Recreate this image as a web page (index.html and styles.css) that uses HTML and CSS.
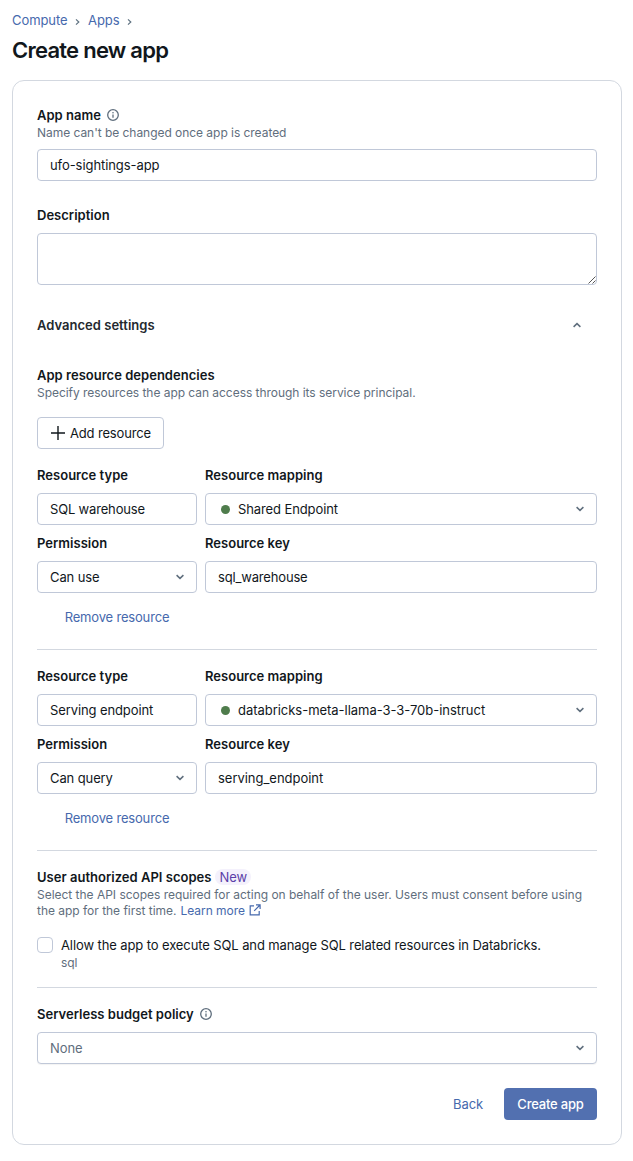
FILE: index.html
```html
<!DOCTYPE html>
<html lang="en">
<head>
<meta charset="utf-8">
<title>Create new app</title>
<link rel="stylesheet" href="styles.css">
</head>
<body>
<svg class="sprite" width="0" height="0" aria-hidden="true">
  <symbol id="chevron" viewBox="0 0 8 6"><path d="M.6 1.1 4 4.4 7.4 1.1" fill="none" stroke="currentColor" stroke-width="1.5"/></symbol>
  <symbol id="info" viewBox="0 0 12 12"><circle cx="6" cy="6" r="5.3" fill="none" stroke="currentColor" stroke-width="1.3"/><path d="M6 5.4V8.8" stroke="currentColor" stroke-width="1.3"/><circle cx="6" cy="3.7" r=".8" fill="currentColor"/></symbol>
  <symbol id="crumb" viewBox="0 0 5 8"><path d="M1 1.4 3.8 4 1 6.6" fill="none" stroke="currentColor" stroke-width="1.2"/></symbol>
</svg>
<nav class="breadcrumb">
  <a>Compute</a><svg><use href="#crumb"/></svg><a>Apps</a><svg><use href="#crumb"/></svg>
</nav>
<h1 class="title">Create new app</h1>
<main class="card">
  <label class="label">App name<svg class="info"><use href="#info"/></svg></label>
  <p class="hint">Name can't be changed once app is created</p>
  <input class="control name-input" value="ufo-sightings-app">
  <label class="label description-label">Description</label>
  <div class="textarea-wrap">
    <textarea class="textarea"></textarea>
    <svg class="grip" viewBox="0 0 8 8"><path d="M.5 7.5 7.5.5M4.5 7.5 7.5 4.5" stroke="#444" stroke-width=".9"/></svg>
  </div>
  <div class="advanced"><span>Advanced settings</span><svg class="chevron up"><use href="#chevron"/></svg></div>
  <h2 class="label">App resource dependencies</h2>
  <p class="hint">Specify resources the app can access through its service principal.</p>
  <button class="add"><svg viewBox="0 0 14 14"><path d="M7 0V14M0 7H14" stroke="#11171c" stroke-width="1.4"/></svg>Add resource</button>

  <section class="resource">
    <label class="label">Resource type</label>
    <label class="label">Resource mapping</label>
    <div class="control tight">SQL warehouse</div>
    <div class="control mapping"><i class="dot"></i>Shared Endpoint<svg class="chevron"><use href="#chevron"/></svg></div>
    <label class="label">Permission</label>
    <label class="label">Resource key</label>
    <div class="control">Can use<svg class="chevron"><use href="#chevron"/></svg></div>
    <input class="control tight" value="sql_warehouse">
    <button class="link remove">Remove resource</button>
  </section>
  <hr class="rule">
  <section class="resource">
    <label class="label">Resource type</label>
    <label class="label">Resource mapping</label>
    <div class="control">Serving endpoint</div>
    <div class="control mapping wide"><i class="dot"></i>databricks-meta-llama-3-3-70b-instruct<svg class="chevron"><use href="#chevron"/></svg></div>
    <label class="label">Permission</label>
    <label class="label">Resource key</label>
    <div class="control">Can query<svg class="chevron"><use href="#chevron"/></svg></div>
    <input class="control wide" value="serving_endpoint">
    <button class="link remove">Remove resource</button>
  </section>
  <hr class="rule">
  <h2 class="label">User authorized API scopes<span class="tag">New</span></h2>
  <p class="hint scope-hint">Select the API scopes required for acting on behalf of the user. Users must consent before using<br>the app for the first time. <a class="learn">Learn more<svg class="external" viewBox="0 0 12 12"><path d="M5 1.8H1.2V10.8H10.2V7M7 .9H11.1V5M11 1 5.2 6.8" fill="none" stroke="currentColor" stroke-width="1.2"/></svg></a></p>
  <div class="scope">
    <i class="checkbox"></i>
    <div><div class="scope-name">Allow the app to execute SQL and manage SQL related resources in Databricks.</div><p class="hint">sql</p></div>
  </div>
  <hr class="rule">
  <label class="label">Serverless budget policy<svg class="info"><use href="#info"/></svg></label>
  <div class="control policy">None<svg class="chevron"><use href="#chevron"/></svg></div>
  <footer class="actions"><button class="link">Back</button><button class="primary">Create app</button></footer>
</main>
</body>
</html>
```
FILE: styles.css
```css
* { box-sizing: border-box; }
body { margin: 0; padding: 10px 11px 0 12px; background: #fff; color: #11171c; font: 13px/20px Inter, "Liberation Sans", sans-serif; letter-spacing: -.105px; }
.sprite { position: absolute; }
button, input { font: inherit; color: inherit; letter-spacing: inherit; }
h1, h2, p { margin: 0; }
a { color: #4669ad; }

.breadcrumb { display: flex; align-items: center; height: 20px; letter-spacing: -.07px; }
.breadcrumb svg { width: 5px; height: 8px; margin: 3px 8px 0 7.5px; color: #5f7281; }
.title { margin-top: 12px; height: 16px; font-size: 22px; line-height: 16px; font-weight: 600; letter-spacing: -.75px; }

.card { height: 1065px; margin-top: 22px; padding: 24px; border: 1px solid #d3d8e0; border-radius: 12px; }
.label { display: flex; align-items: center; height: 20px; font-size: 13px; font-weight: 600; letter-spacing: .02px; }
.info { width: 12px; height: 12px; margin-left: 6px; color: #5f6e7d; }
.hint { color: #5f6e7d; font-size: 12px; line-height: 16px; letter-spacing: -.04px; }
.scope-hint { letter-spacing: -.02px; }

.control { display: flex; align-items: center; width: 100%; height: 32px; padding: 0 12px; border: 1px solid #c0c8d8; border-radius: 4px; background: #fff; outline: 0; }
.tight { letter-spacing: -.17px; }
.wide { letter-spacing: -.03px; }
.chevron { width: 8px; height: 6px; margin-left: auto; color: #5f6e7d; }
.up { transform: rotate(180deg); }
.name-input { margin-top: 8px; letter-spacing: -.07px; }
.description-label { margin-top: 24px; }
.textarea-wrap { position: relative; height: 52px; margin-top: 8px; }
.textarea { display: block; width: 100%; height: 52px; border: 1px solid #c0c8d8; border-radius: 4px; resize: none; outline: 0; }
.grip { position: absolute; right: 1px; bottom: 1px; width: 8px; height: 8px; }
.advanced { display: flex; align-items: center; height: 20px; margin: 30px 0; padding-right: 16px; font-weight: 600; letter-spacing: .02px; color: #24292e; }

.add { display: flex; align-items: center; gap: 5px; width: 127px; height: 32px; margin: 16px 0; padding: 0 0 0 13px; border: 1px solid #c0c8d8; border-radius: 4px; background: #fff; letter-spacing: -.16px; white-space: nowrap; }
.add svg { width: 14px; height: 14px; }

.resource { display: grid; grid-template-columns: 160px 392px; column-gap: 8px; row-gap: 8px; }
.mapping { padding-left: 15px; }
.dot { width: 9px; height: 9px; margin-right: 8px; border-radius: 50%; background: #4f7c4c; }
.link { height: 32px; padding: 0; border: 0; background: none; color: #4669ad; }
.remove { justify-self: center; letter-spacing: -.18px; }
.rule { height: 1px; margin: 16px 0; border: 0; background: #d3d8e0; }

.tag { height: 16px; margin-left: 4px; padding: 0 4px; border-radius: 8px; background: #f4f1fc; color: #5b3fa8; font-weight: 400; line-height: 16px; letter-spacing: -.05px; }
.learn { margin-left: .5px; }
.external { width: 12px; height: 12px; margin-left: 4px; vertical-align: -1px; }
.scope { display: flex; gap: 8px; margin-top: 16px; }
.checkbox { width: 16px; height: 16px; margin-top: 2px; border: 1px solid #c0c8d8; border-radius: 4px; }
.policy { margin-top: 8px; color: #5f6e7d; box-shadow: 0 1px 1px #0000000d; }
.actions { display: flex; justify-content: flex-end; gap: 21px; margin-top: 24px; }
.primary { width: 93px; height: 32px; padding: 0; border: 0; border-radius: 4px; background: #5270b0; color: #fff; font-weight: 500; letter-spacing: -.2px; }
```
